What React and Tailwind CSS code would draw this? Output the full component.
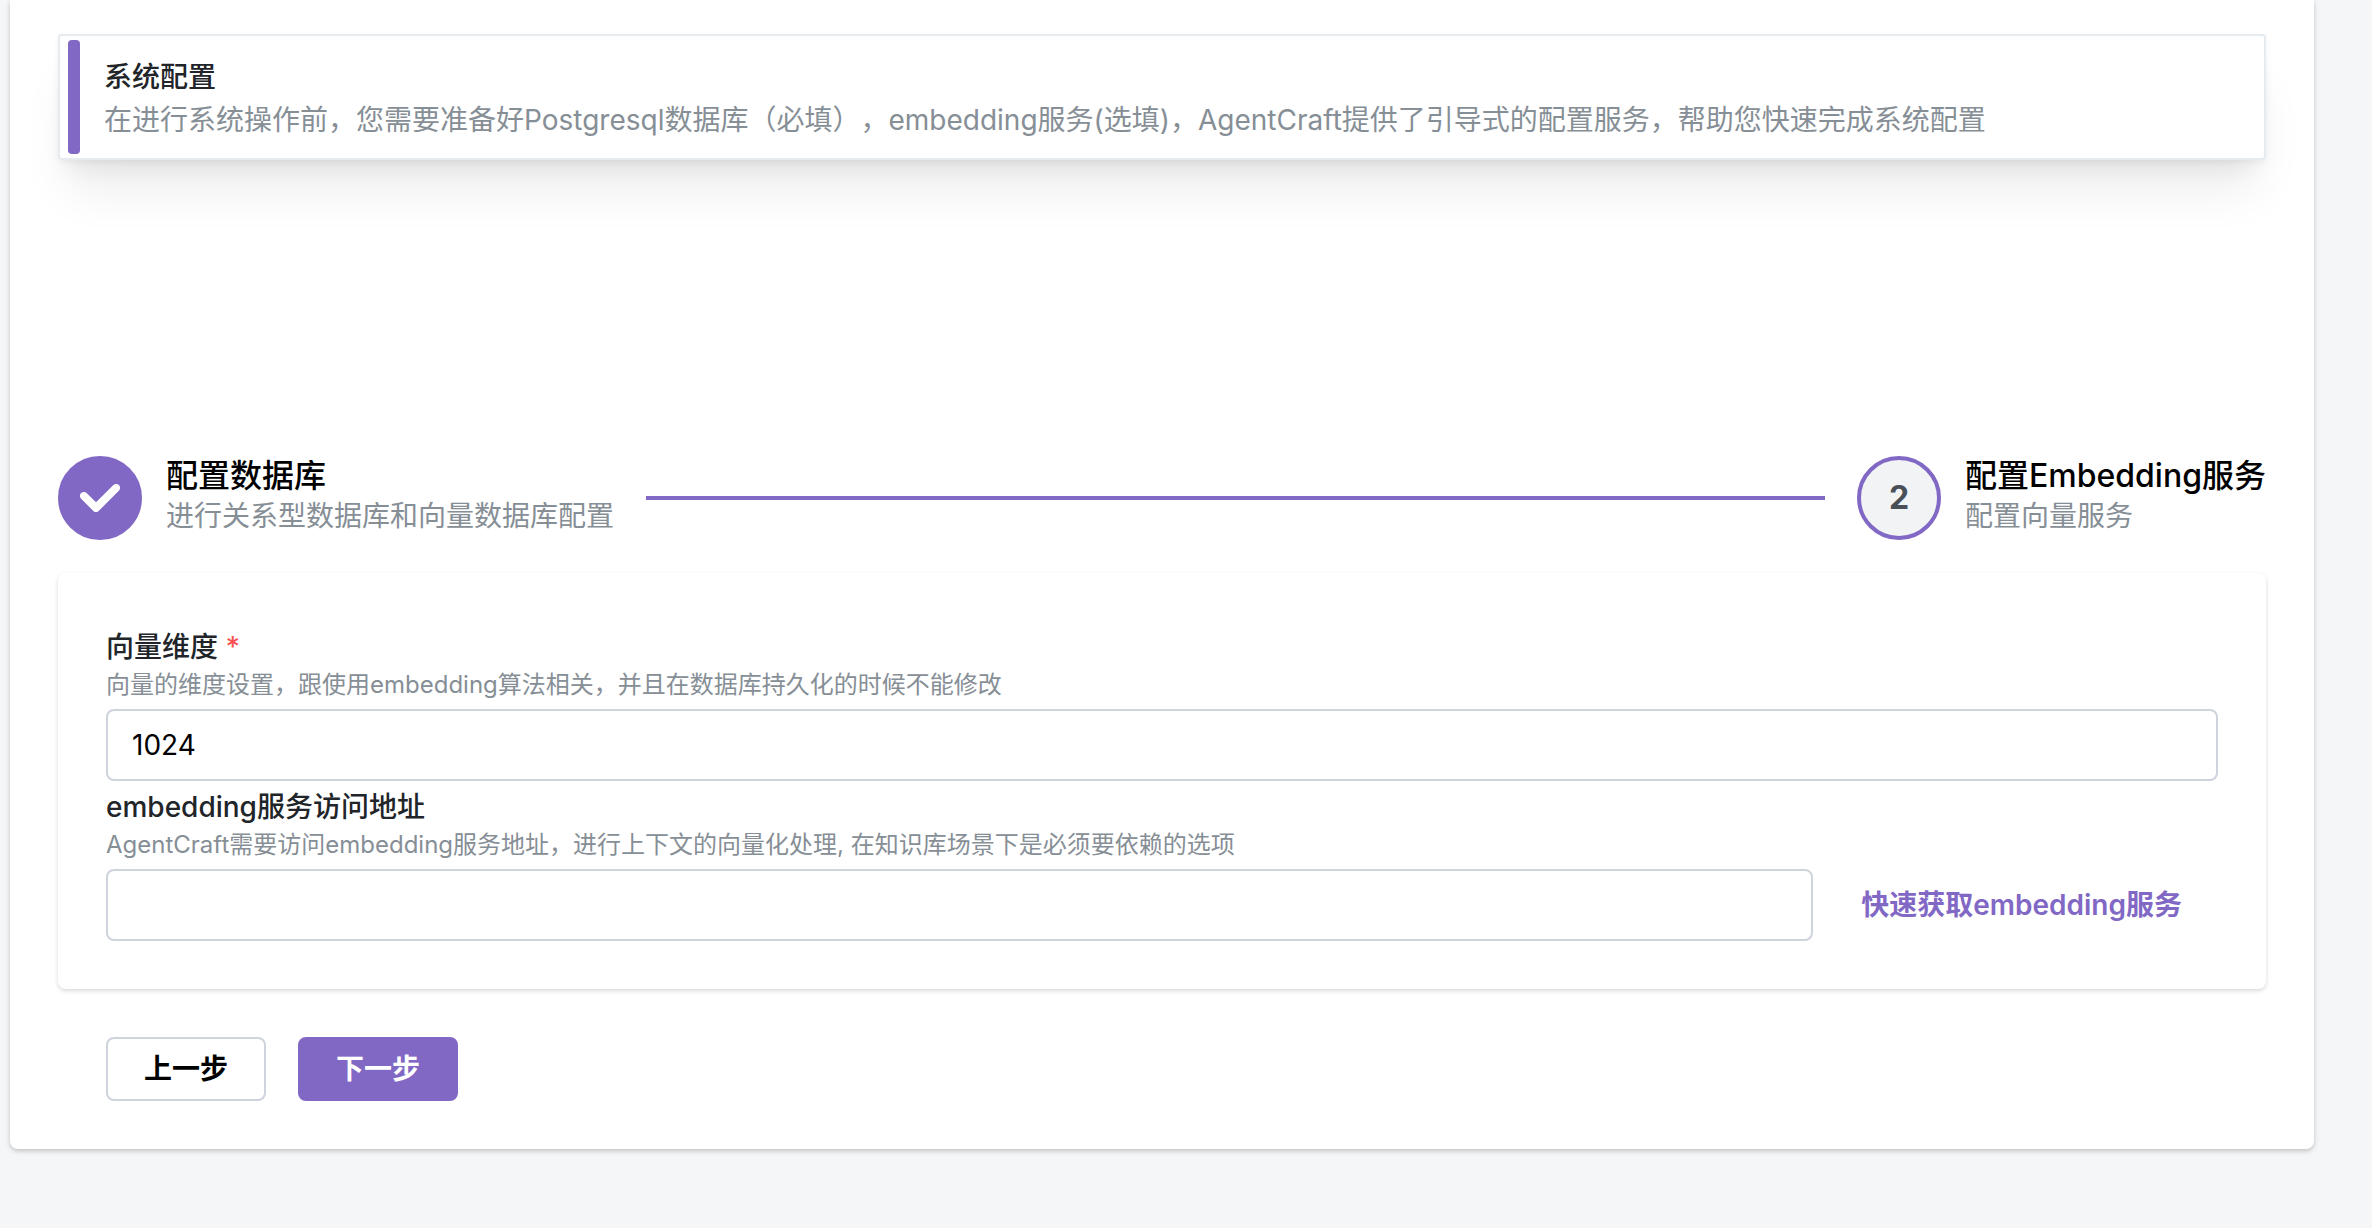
import React, { useState } from "react";

const CheckIcon = () => (
  <svg viewBox="0 0 10 7" fill="none" className="w-10 h-7" aria-hidden="true">
    <path
      d="M4 4.586L1.707 2.293A1 1 0 1 0 .293 3.707l3 3a.997.997 0 0 0 1.414 0l5-5A1 1 0 1 0 8.293.293L4 4.586z"
      fill="currentColor"
      fillRule="evenodd"
      clipRule="evenodd"
    />
  </svg>
);

const Step = ({ number, done, label, description }) => (
  <div className="flex items-center gap-6">
    <div
      className={`flex items-center justify-center size-21 rounded-full border-4 border-[#8268c5] text-[32px] font-bold ${
        done ? "bg-[#8268c5] text-white" : "bg-[#f1f3f5] text-[#495057]"
      }`}
    >
      {done ? <CheckIcon /> : number}
    </div>
    <div className="pb-1">
      <div className="text-[32px] leading-10 font-medium text-black">{label}</div>
      <div className="text-[28px] leading-10 text-[#868e96]">{description}</div>
    </div>
  </div>
);

const Field = ({ id, label, description, required, value, onChange, children }) => (
  <div className="pt-1.5">
    <label htmlFor={id} className="block text-[28px] leading-10 font-medium text-[#212529]">
      {label}
      {required && <span className="text-[#fa5252]"> *</span>}
    </label>
    <p className="text-2xl leading-9 text-[#868e96]">{description}</p>
    <div className="flex items-center gap-12 mt-1.5">
      <input
        id={id}
        type="text"
        required={required}
        value={value}
        onChange={onChange}
        className="flex-1 min-w-0 h-18 px-6 rounded-lg border-2 border-[#ced3dd] bg-white text-[28px] text-black outline-none focus:border-[#8268c5]"
      />
      {children}
    </div>
  </div>
);

const SystemConfig = () => {
  const [form, setForm] = useState({ dimension: "1024", embeddingUrl: "" });

  const handleChange = (key) => (e) => {
    setForm({ ...form, [key]: e.target.value });
  };

  return (
    <div className="min-h-screen bg-[#f4f6f8] pl-2.5 pr-[58px] pb-20 font-[Inter,'Noto_Sans_CJK_SC',sans-serif] [text-spacing-trim:space-all]">
      <main className="bg-white rounded-b-lg px-12 pt-[34px] pb-12 shadow-[0_2px_6px_rgba(0,0,0,0.1),0_2px_4px_rgba(0,0,0,0.12)]">
        {/* Notice */}
        <section className="flex rounded-sm border-2 border-[#e6ebf0] bg-white pl-2 shadow-[0_2px_6px_rgba(0,0,0,0.05),0_40px_50px_-10px_rgba(0,0,0,0.07),0_20px_20px_-10px_rgba(0,0,0,0.06)]">
          <div className="w-3 my-1 rounded bg-[#8268c5]"></div>
          <div className="flex-1 pt-5 pb-4 px-6">
            <h1 className="text-[28px] leading-[43px] font-medium text-[#212529]">系统配置</h1>
            <p className="text-[28px] leading-[43px] text-[#868e96]">
              在进行系统操作前，您需要准备好Postgresql数据库（必填），embedding服务(选填)，AgentCraft提供了引导式的配置服务，帮助您快速完成系统配置
            </p>
          </div>
        </section>

        {/* Stepper */}
        <div className="flex items-center gap-8 mt-74">
          <Step done label="配置数据库" description="进行关系型数据库和向量数据库配置" />
          <div className="flex-1 h-1 bg-[#8268c5]"></div>
          <Step number={2} label="配置Embedding服务" description="配置向量服务" />
        </div>

        <form onSubmit={(e) => e.preventDefault()}>
          <div className="mt-[33px] p-12 rounded-lg bg-white shadow-[0_2px_6px_rgba(0,0,0,0.05),0_2px_4px_rgba(0,0,0,0.1)]">
            <Field
              id="dimension"
              label="向量维度"
              description="向量的维度设置，跟使用embedding算法相关，并且在数据库持久化的时候不能修改"
              required
              value={form.dimension}
              onChange={handleChange("dimension")}
            />
            <Field
              id="embeddingUrl"
              label="embedding服务访问地址"
              description="AgentCraft需要访问embedding服务地址，进行上下文的向量化处理, 在知识库场景下是必须要依赖的选项"
              value={form.embeddingUrl}
              onChange={handleChange("embeddingUrl")}
            >
              <a href="#embedding" className="mr-9 text-[28px] font-semibold text-[#8268c5]">
                快速获取embedding服务
              </a>
            </Field>
          </div>

          <div className="flex gap-8 mt-12 px-12">
            <button
              type="button"
              className="h-16 px-9 rounded-lg border-2 border-[#ced3dd] bg-white text-[28px] leading-none font-semibold text-black"
            >
              上一步
            </button>
            <button
              type="submit"
              className="h-16 px-9 rounded-lg border-2 border-[#8268c5] bg-[#8268c5] text-[28px] leading-none font-semibold text-white"
            >
              下一步
            </button>
          </div>
        </form>
      </main>
    </div>
  );
};

export default SystemConfig;
